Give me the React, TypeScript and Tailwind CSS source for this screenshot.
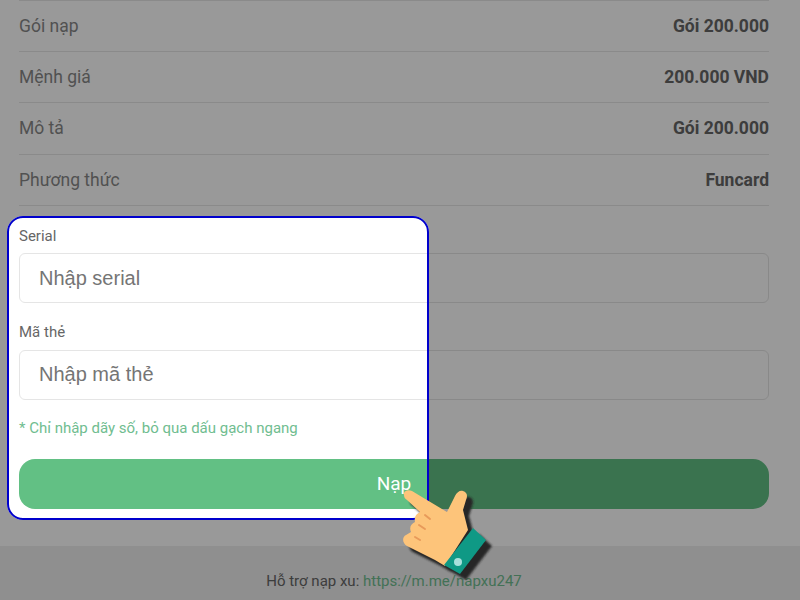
const rows = [
  { label: "Gói nạp", value: "Gói 200.000" },
  { label: "Mệnh giá", value: "200.000 VND" },
  { label: "Mô tả", value: "Gói 200.000" },
  { label: "Phương thức", value: "Funcard" },
];

const handPath =
  "M9 15 C8 11 13 9 17 11 L52 32 L60 16 C62 12 65 10 68 11 C72 12 73 16 71 20 L68 30 L73 50 L50 86 L40 80 L12 66 C7 63 7 57 11 55 L16 52 C14 47 16 44 20 42 C19 37 21 34 25 32 L12 20 C10 19 9 17 9 15 Z";
const cuffPath = "M78 48 L91 60 L65 94 L49 85 Z";

function Hand() {
  return (
    <svg viewBox="0 0 100 100" className="absolute left-[395px] top-[480px] w-[100px] h-[100px]">
      <defs>
        <filter id="soft" x="-10%" y="-10%" width="120%" height="120%">
          <feGaussianBlur stdDeviation="0.8" />
        </filter>
      </defs>
      <g transform="translate(6 6)" fill="#262626" filter="url(#soft)">
        <path d={handPath} />
        <path d={cuffPath} />
      </g>
      <path d={handPath} fill="#fdc47a" />
      <path d="M30 35 L35 39 M24 45 L30 49 M20 57 L25 60" stroke="#e89a5a" strokeWidth="2" strokeLinecap="round" fill="none" />
      <path d={cuffPath} fill="#0f9985" />
      <circle cx="63" cy="82" r="4" fill="#a8e0dc" />
    </svg>
  );
}

export default function App() {
  return (
    <div className="relative w-[800px] h-[600px] overflow-hidden bg-white font-['Roboto',sans-serif]">
      <div className="pl-[19px] pr-[31px]">
        <div className="border-t border-[#e6e6e6]">
          {rows.map((row) => (
            <div key={row.label} className="flex items-center justify-between h-[51.2px] border-b border-[#e6e6e6] text-[17.5px]">
              <span className="text-[#888888]">{row.label}</span>
              <span className="font-bold text-[#666666]">{row.value}</span>
            </div>
          ))}
        </div>
        <div className="mt-[20.2px]">
          <label className="block text-[15px] leading-5 text-[#666666]">Serial</label>
          <input placeholder="Nhập serial" className="mt-[7px] block w-full h-[50px] pl-[19px] pr-5 pt-[2px] font-['Liberation_Sans',sans-serif] text-[20px] border border-[#e5e5e5] rounded-md placeholder:text-[#757575]" />
          <label className="block mt-[19px] text-[15px] leading-5 text-[#666666]">Mã thẻ</label>
          <input placeholder="Nhập mã thẻ" className="mt-[8px] block w-full h-[50px] pl-[19px] pr-5 font-['Liberation_Sans',sans-serif] text-[20px] border border-[#e5e5e5] rounded-md placeholder:text-[#757575]" />
          <p className="mt-[18px] text-[15px] leading-5 text-[#70bd90]">* Chỉ nhập dãy số, bỏ qua dấu gạch ngang</p>
          <button className="mt-[21px] w-full h-[50px] rounded-2xl bg-[#62c084] text-white text-[19px]">Nạp</button>
        </div>
      </div>
      <div className="absolute left-0 right-0 top-[546px] h-[54px] bg-[#eeeeee] pt-[25px] pr-[12px] text-center text-[15px] leading-5 text-[#666666]">
        Hỗ trợ nạp xu: <span className="text-[#70bd90]">https://m.me/napxu247</span>
      </div>
      <div className="absolute left-[7px] top-[216px] w-[422px] h-[304px] rounded-2xl border-2 border-[#0000cc] shadow-[0_0_0_9999px_rgba(0,0,0,0.4)]" />
      <Hand />
    </div>
  );
}
